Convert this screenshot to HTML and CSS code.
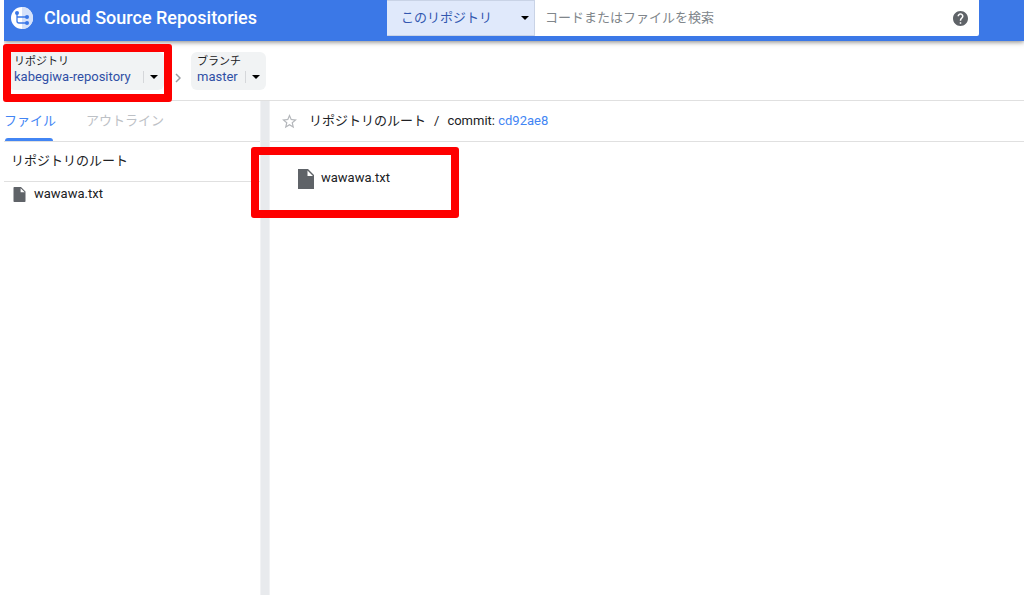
FILE: index.html
```html
<!DOCTYPE html>
<html lang="ja">
<head>
  <meta charset="utf-8">
  <title>Cloud Source Repositories</title>
  <meta name="viewport" content="width=device-width, initial-scale=1">
  <link rel="stylesheet" href="styles.css">
</head>
<body>

  <header class="topbar">
    <a class="brand" href="#">
      <svg class="logo" viewBox="0 0 22 22" aria-hidden="true">
        <circle cx="11" cy="11" r="11" fill="#fff"/>
        <path d="M11 0a11 11 0 0 1 0 22z" fill="#d5e2fb"/>
        <path d="M6 6v8q0 2 2 2h8M6 10h10" fill="none" stroke="#3b78e7" stroke-width="1.300"/>
        <circle cx="6" cy="6" r="2" fill="#3b78e7"/>
        <circle cx="16" cy="10" r="2" fill="#3b78e7"/>
        <circle cx="16" cy="16" r="2" fill="#3b78e7"/>
      </svg>
      <span>Cloud Source Repositories</span>
    </a>
    <form class="search">
      <div class="scope">
        <select class="scope-select" aria-label="検索範囲">
          <option>このリポジトリ</option>
        </select>
        <svg class="arrow" viewBox="0 0 8 4" aria-hidden="true"><path d="M0 0h8L4 4z"/></svg>
      </div>
      <input class="query" type="text" placeholder="コードまたはファイルを検索" aria-label="コードまたはファイルを検索">
      <button class="help" type="button" aria-label="ヘルプ">
        <svg viewBox="2 2 20 20"><path fill="#5f6368" d="M12 2C6.480 2 2 6.480 2 12s4.480 10 10 10 10-4.480 10-10S17.520 2 12 2zm1 17h-2v-2h2v2zm2.070-7.750l-.9.920C13.450 12.900 13 13.500 13 15h-2v-.5c0-1.100.45-2.100 1.170-2.830l1.240-1.260c.37-.36.59-.86.59-1.410 0-1.100-.9-2-2-2s-2 .9-2 2H8c0-2.210 1.790-4 4-4s4 1.790 4 4c0 .88-.36 1.680-.93 2.250z"/></svg>
      </button>
    </form>
  </header>

  <nav class="context">
    <div class="picker">
      <label for="repo">リポジトリ</label>
      <div class="picker-row">
        <select id="repo" class="repo-select"><option>kabegiwa-repository</option></select>
        <span class="picker-arrow"><svg viewBox="0 0 8 4" aria-hidden="true"><path d="M0 0h8L4 4z"/></svg></span>
      </div>
    </div>
    <svg class="chevron" viewBox="0 0 6 10" aria-hidden="true"><path d="M1 1l4 4-4 4" fill="none" stroke="#9a9da1" stroke-width="1.500"/></svg>
    <div class="picker">
      <label for="branch">ブランチ</label>
      <div class="picker-row">
        <select id="branch"><option>master</option></select>
        <span class="picker-arrow"><svg viewBox="0 0 8 4" aria-hidden="true"><path d="M0 0h8L4 4z"/></svg></span>
      </div>
    </div>
    <div class="mark mark-repo"></div>
  </nav>

  <div class="workspace">
    <aside class="sidebar">
      <div class="tabs">
        <button class="tab active" type="button">ファイル</button>
        <button class="tab" type="button">アウトライン</button>
      </div>
      <div class="root">リポジトリのルート</div>
      <a class="tree-item" href="#">
        <svg class="file-icon" viewBox="0 0 16 20" aria-hidden="true"><path fill="#5f6368" d="M1 0h9l6 6v13a1 1 0 0 1-1 1H1a1 1 0 0 1-1-1V1a1 1 0 0 1 1-1zm8.500 1.500V7H15z"/></svg>
        wawawa.txt
      </a>
    </aside>

    <div class="divider"></div>

    <main class="content">
      <div class="path">
        <button class="star" type="button" aria-label="スター">
          <svg viewBox="2 2 20 20"><path fill="#b4b7bb" d="M22 9.240l-7.190-.62L12 2 9.190 8.630 2 9.240l5.460 4.730L5.820 21 12 17.270 18.180 21l-1.630-7.030L22 9.240zM12 15.400l-3.760 2.270 1-4.280-3.320-2.880 4.380-.38L12 6.100l1.710 4.040 4.380.38-3.320 2.880 1 4.280L12 15.400z"/></svg>
        </button>
        <span>リポジトリのルート</span>
        <span class="slash">/</span>
        <span class="commit">commit: <a href="#">cd92ae8</a></span>
      </div>
      <div class="files">
        <a class="file" href="#">
          <svg class="file-icon" viewBox="0 0 16 20" aria-hidden="true"><path fill="#5f6368" d="M0 0h10l6 6v14H0zm9.500 1.500V7H15z"/></svg>
          wawawa.txt
        </a>
        <div class="mark mark-file"></div>
      </div>
    </main>
  </div>

</body>
</html>
```

FILE: styles.css
```css
* {
  box-sizing: border-box;
}
body {
  margin: 0;
  padding-left: 4px;
  min-height: 100vh;
  display: flex;
  flex-direction: column;
  background: #fff;
  color: #202124;
  font: 13px/16px Roboto, "Noto Sans CJK JP", sans-serif;
}
a {
  color: inherit;
  text-decoration: none;
}
button,
select,
input {
  margin: 0;
  padding: 0;
  border: 0;
  background: none;
  color: inherit;
  font: inherit;
}
select {
  appearance: none;
}
svg {
  display: block;
}

/* top bar */
.topbar {
  display: flex;
  height: 41px;
  padding: 0 45px 5px 7px;
  background: #3b78e7;
  box-shadow: 0 1px 5px rgba(0, 0, 0, 0.5);
  clip-path: inset(0 0 -10px 0);
}
.brand {
  flex: 0 0 376px;
  display: flex;
  align-items: center;
  gap: 11px;
  color: #fff;
  font: 500 18px/24px Roboto, sans-serif;
}
.logo {
  width: 22px;
  height: 22px;
}
.search {
  flex: 1;
  display: flex;
  align-items: stretch;
  background: #fff;
  border-radius: 0 0 2px 0;
}
.scope {
  flex: 0 0 148px;
  position: relative;
  display: flex;
  background: #e0e9fb;
  border: 1px solid #c9d3e6;
  border-left: 0;
  color: #3257b0;
}
.scope-select {
  width: 100%;
  padding-left: 14px;
}
.arrow {
  position: absolute;
  right: 5px;
  top: 15px;
  width: 8px;
  height: 4px;
  pointer-events: none;
}
.query {
  flex: 1;
  min-width: 0;
  padding-left: 10px;
}
.query::placeholder {
  color: #80868b;
  opacity: 1;
}
.help {
  padding: 0 11px;
}
.help svg {
  width: 15px;
  height: 15px;
}

/* repository and branch pickers */
.context {
  position: relative;
  display: flex;
  align-items: center;
  height: 60px;
  padding-left: 4px;
  border-bottom: 1px solid #e0e0e0;
}
.picker {
  padding: 3px 6px 5px;
  border-radius: 6px;
  background: #f1f3f4;
}
.picker label {
  display: block;
  font-size: 11px;
  line-height: 14px;
}
.picker-row {
  display: flex;
  align-items: center;
  color: #2f4fa5;
}
.picker-row select {
  height: 16px;
}
.picker-row .repo-select {
  min-width: 122px;
}
.picker-arrow {
  margin-left: 7px;
  padding: 4px 0 4px 6px;
  border-left: 1px solid #d5d7da;
}
.picker-arrow svg {
  width: 8px;
  height: 4px;
}
.chevron {
  width: 6px;
  height: 10px;
  margin: 14px 10px 0 11px;
}

/* workspace */
.workspace {
  flex: 1;
  display: flex;
}
.sidebar {
  flex: 0 0 256px;
}
.tabs {
  display: flex;
  gap: 30px;
  height: 41px;
  border-bottom: 1px solid #e0e0e0;
}
.tab {
  border-top: 3px solid transparent;
  border-bottom: 3px solid transparent;
  color: #bdc1c6;
}
.tab.active {
  position: relative;
  color: #4285f4;
}
.tab.active::after {
  content: "";
  position: absolute;
  left: 1px;
  right: 3px;
  bottom: -3px;
  height: 3px;
  border-radius: 3px 3px 0 0;
  background: #4285f4;
}
.root {
  height: 40px;
  padding: 11px 7px;
  border-bottom: 1px solid #e0e0e0;
}
.tree-item {
  display: flex;
  align-items: center;
  gap: 8px;
  height: 24px;
  padding-left: 9px;
}
.tree-item .file-icon {
  width: 13px;
  height: 15px;
}
.divider {
  flex: 0 0 10px;
  background: #e8eaed;
  border: 1px solid #f1f2f4;
  border-width: 0 1px;
}
.content {
  flex: 1;
  min-width: 0;
}
.path {
  display: flex;
  align-items: center;
  height: 41px;
  padding-left: 12px;
  border-bottom: 1px solid #e0e0e0;
}
.star {
  margin-right: 12px;
}
.star svg {
  width: 15px;
  height: 15px;
}
.slash {
  margin: 0 8px;
}
.commit a {
  color: #4285f4;
}
.files {
  position: relative;
  padding: 25px 28px;
}
.file {
  display: flex;
  align-items: center;
  gap: 7px;
}
.file .file-icon {
  width: 16px;
  height: 20px;
  margin-top: 2px;
}

/* highlight frames */
.mark {
  position: absolute;
  border: 8px solid #fe0000;
  border-radius: 3px;
  pointer-events: none;
}
.mark-repo {
  left: -1px;
  top: 3px;
  width: 169px;
  height: 58px;
}
.mark-file {
  left: -19px;
  top: 5px;
  width: 208px;
  height: 71px;
}
```
